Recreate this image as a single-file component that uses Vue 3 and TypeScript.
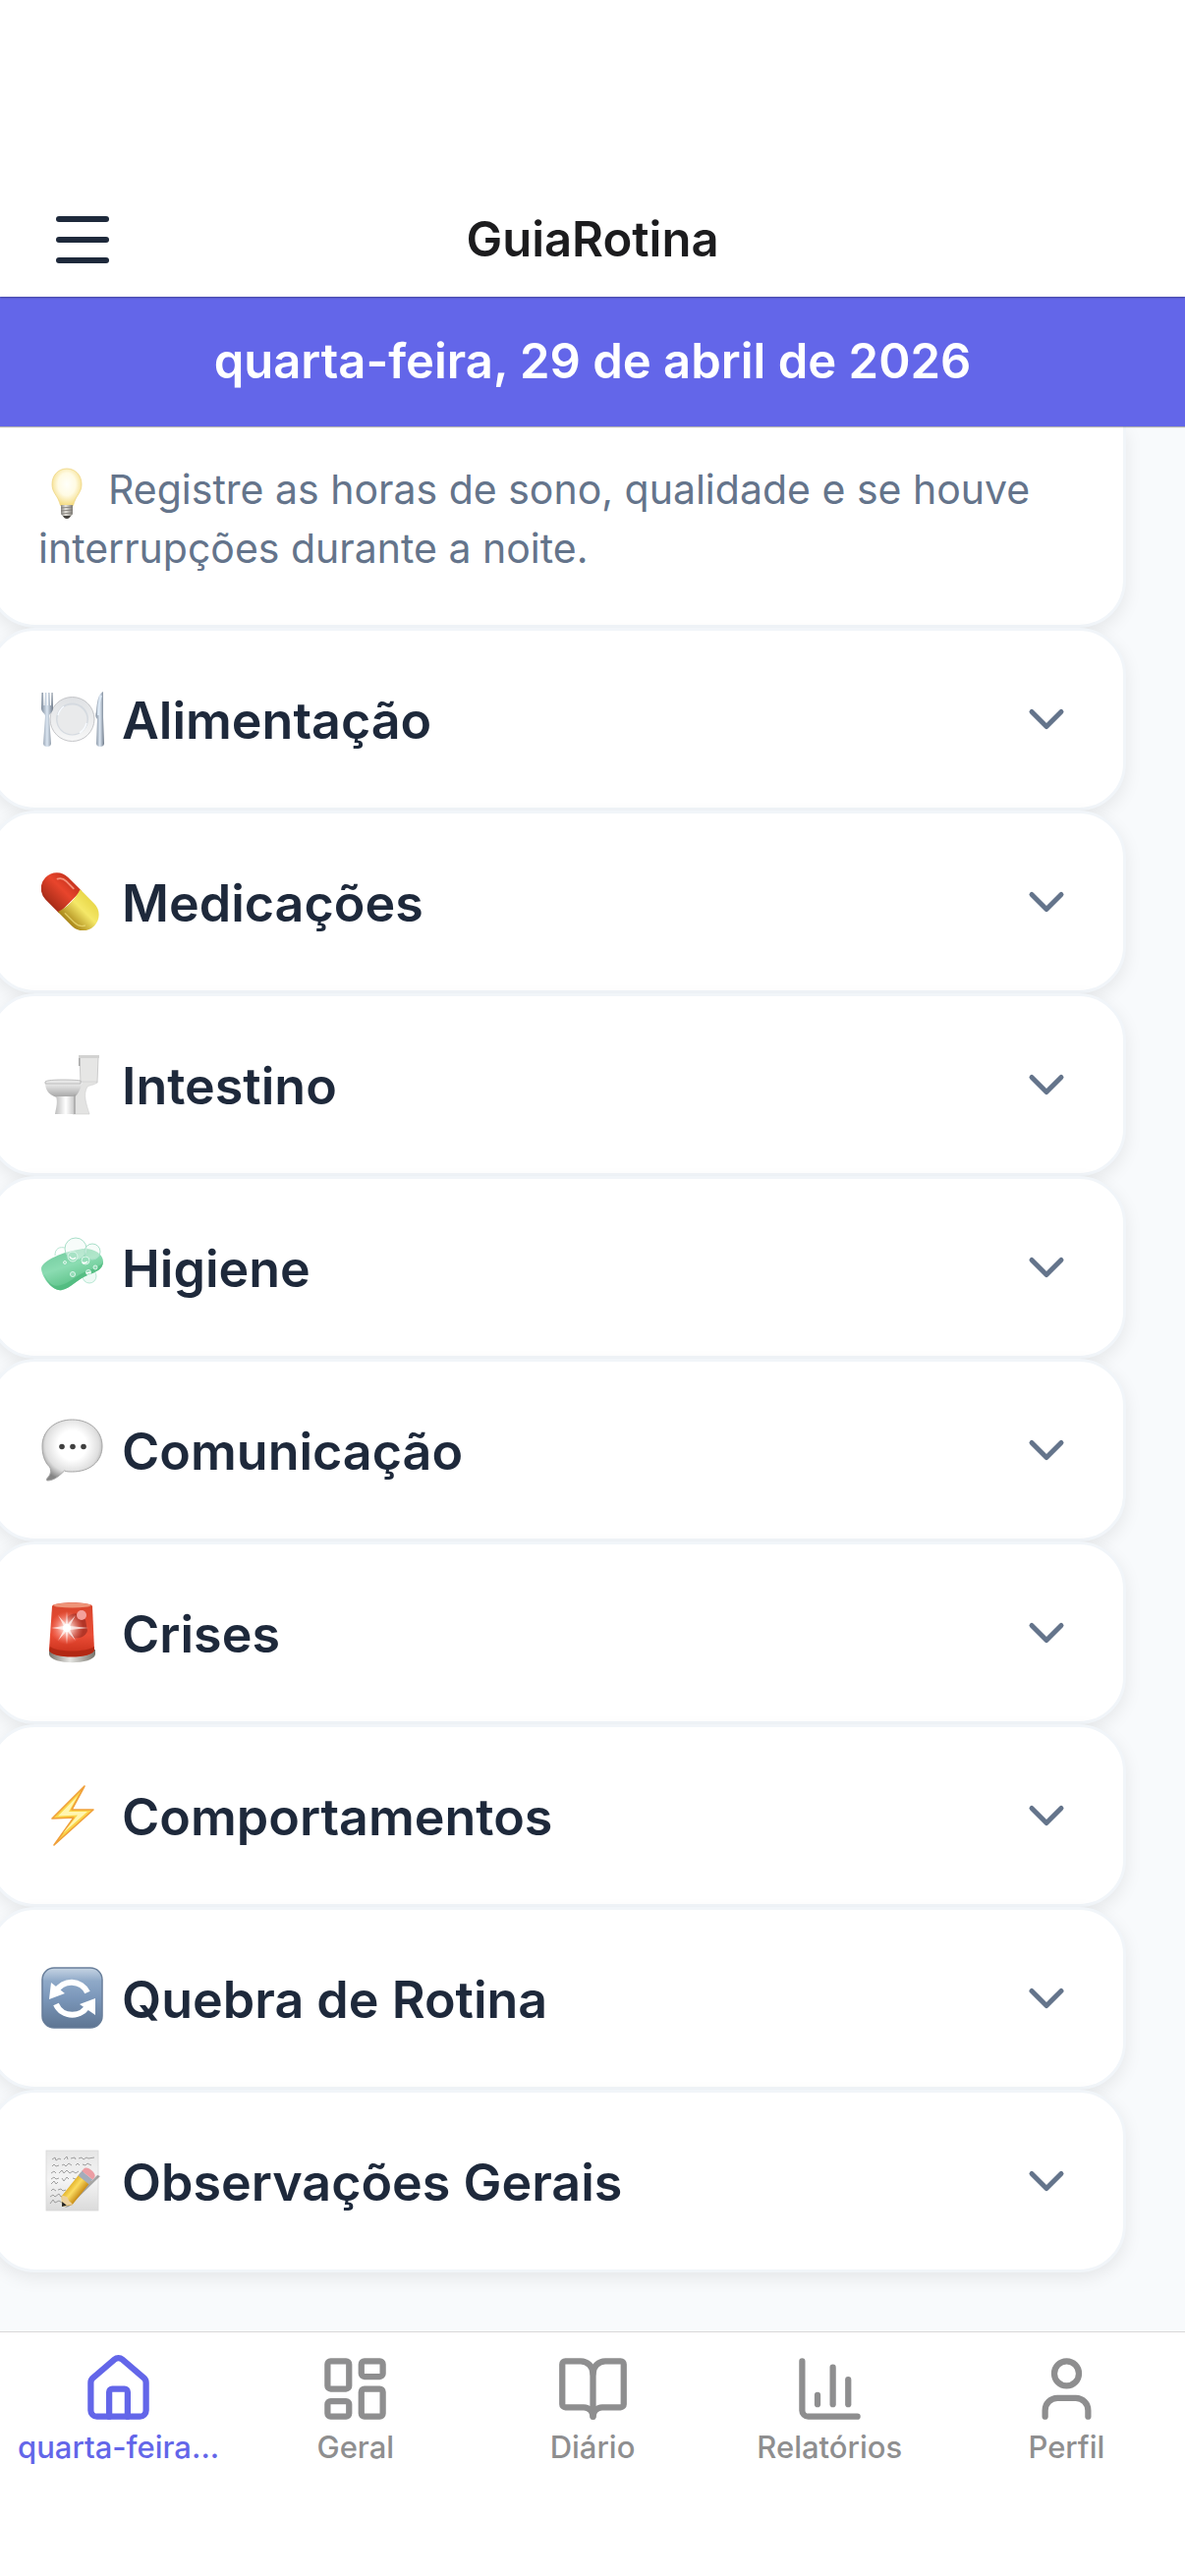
<script setup lang="ts">
import { ref } from 'vue'

interface Section {
  id: string
  title: string
}

interface Tab {
  id: string
  label: string
  paths: string[]
}

const today = 'quarta-feira, 29 de abril de 2026'

const sections: Section[] = [
  { id: 'food', title: 'Alimentação' },
  { id: 'pill', title: 'Medicações' },
  { id: 'toilet', title: 'Intestino' },
  { id: 'soap', title: 'Higiene' },
  { id: 'speech', title: 'Comunicação' },
  { id: 'siren', title: 'Crises' },
  { id: 'bolt', title: 'Comportamentos' },
  { id: 'refresh', title: 'Quebra de Rotina' },
  { id: 'memo', title: 'Observações Gerais' },
]

const tabs: Tab[] = [
  {
    id: 'today',
    label: 'quarta-feira...',
    paths: [
      'M15 21v-8a1 1 0 0 0-1-1h-4a1 1 0 0 0-1 1v8',
      'M3 10a2 2 0 0 1 .709-1.528l7-6a2 2 0 0 1 2.582 0l7 6A2 2 0 0 1 21 10v9a2 2 0 0 1-2 2H5a2 2 0 0 1-2-2z',
    ],
  },
  {
    id: 'general',
    label: 'Geral',
    paths: [
      'M4 3h5a1 1 0 0 1 1 1v7a1 1 0 0 1-1 1H4a1 1 0 0 1-1-1V4a1 1 0 0 1 1-1z',
      'M15 3h5a1 1 0 0 1 1 1v3a1 1 0 0 1-1 1h-5a1 1 0 0 1-1-1V4a1 1 0 0 1 1-1z',
      'M15 12h5a1 1 0 0 1 1 1v7a1 1 0 0 1-1 1h-5a1 1 0 0 1-1-1v-7a1 1 0 0 1 1-1z',
      'M4 16h5a1 1 0 0 1 1 1v3a1 1 0 0 1-1 1H4a1 1 0 0 1-1-1v-3a1 1 0 0 1 1-1z',
    ],
  },
  {
    id: 'diary',
    label: 'Diário',
    paths: [
      'M12 7v14',
      'M3 18a1 1 0 0 1-1-1V4a1 1 0 0 1 1-1h5a4 4 0 0 1 4 4 4 4 0 0 1 4-4h5a1 1 0 0 1 1 1v13a1 1 0 0 1-1 1h-6a3 3 0 0 0-3 3 3 3 0 0 0-3-3z',
    ],
  },
  {
    id: 'reports',
    label: 'Relatórios',
    paths: ['M3 3v16a2 2 0 0 0 2 2h16', 'M18 17V9', 'M13 17V5', 'M8 17v-3'],
  },
  {
    id: 'profile',
    label: 'Perfil',
    paths: ['M19 21v-2a4 4 0 0 0-4-4H9a4 4 0 0 0-4 4v2', 'M12 3a4 4 0 1 1 0 8 4 4 0 0 1 0-8z'],
  },
]

const activeTab = ref('today')
</script>

<template>
  <div class="page">
    <header class="header">
      <button class="menu" type="button" aria-label="Menu">
        <span class="menu-bar"></span>
        <span class="menu-bar"></span>
        <span class="menu-bar"></span>
      </button>
      <h1 class="brand">GuiaRotina</h1>
    </header>

    <div class="date-bar">{{ today }}</div>

    <main class="content">
      <section class="card hint">
        <p class="hint-text">
          <svg class="bulb" viewBox="0 0 32 52" aria-hidden="true">
            <defs>
              <radialGradient id="bulbGlass" cx=".5" cy=".42" r=".6">
                <stop offset="0" stop-color="#fffffa" />
                <stop offset=".5" stop-color="#fffbe4" />
                <stop offset="1" stop-color="#f3d876" />
              </radialGradient>
              <linearGradient id="bulbBase" x1="0" x2="1">
                <stop offset="0" stop-color="#8b8984" />
                <stop offset=".4" stop-color="#e8e6e0" />
                <stop offset="1" stop-color="#817e78" />
              </linearGradient>
            </defs>
            <path d="M16 1C7 1 1 8 1 17c0 8 5 11 7 17 1 2 1 4 2 5h12c1-1 1-3 2-5 2-6 7-9 7-17C31 8 25 1 16 1z" fill="url(#bulbGlass)" stroke="#efd684" stroke-width=".8" />
            <path d="M10 38h12v9c0 1-2 2-3 3h-6c-1-1-3-2-3-3z" fill="url(#bulbBase)" />
            <path d="M10 41l12-1M10 44l12-1M11 47l10-1" stroke="#77746f" stroke-width=".8" />
            <path d="M12 49h8c-1 2-2 3-4 3s-3-1-4-3z" fill="#45433f" />
          </svg>Registre as horas de sono, qualidade e se houve interrupções durante a noite.
        </p>
      </section>

      <button v-for="section in sections" :key="section.id" class="card row" type="button">
        <svg v-if="section.id === 'food'" class="emoji" viewBox="0 0 64 64" aria-hidden="true">
          <defs>
            <linearGradient id="plate" x1="0" y1="0" x2="0" y2="1">
              <stop offset="0" stop-color="#dfe1e4" />
              <stop offset="1" stop-color="#f7f7f7" />
            </linearGradient>
            <linearGradient id="steel" x1="0" x2="1">
              <stop offset="0" stop-color="#7f8c9c" />
              <stop offset=".5" stop-color="#dbe6f2" />
              <stop offset="1" stop-color="#6d7988" />
            </linearGradient>
          </defs>
          <circle cx="31.500" cy="32" r="22.500" fill="url(#plate)" stroke="#c5c6c9" stroke-width="1" />
          <circle cx="31.500" cy="32" r="16.500" fill="#d5dae0" />
          <circle cx="31.500" cy="32.500" r="15" fill="#e9eaeb" />
          <path d="M17 28a16 16 0 0 1 6-9M46 36a16 16 0 0 1-7 10" fill="none" stroke="#f8fbff" stroke-width="1.500" />
          <path d="M.500 5h1.500l.5 13h1L4 5h1.500l.3 13h1L7 5h1.500l.5 13h1L10.500 5H11.500L12 21c0 4-4 5-4 8L10 57c0 4-8 4-8 0L4 29c0-3-4-4-4-8z" fill="url(#steel)" />
          <path d="M63 4v26l1 27c0 4-8 4-8 0l1-25c-2-2-2-4-1-8 1-11 2-18 7-20z" fill="url(#steel)" />
          <path d="M61 8c-2 5-3 12-3 20" fill="none" stroke="#dde9f5" stroke-width="2" />
        </svg>

        <svg v-else-if="section.id === 'pill'" class="emoji" viewBox="0 0 64 64" aria-hidden="true">
          <defs>
            <linearGradient id="pillRed" x1="0" y1="0" x2="0" y2="1">
              <stop offset="0" stop-color="#c9341f" />
              <stop offset=".4" stop-color="#e8452c" />
              <stop offset="1" stop-color="#a82c18" />
            </linearGradient>
            <linearGradient id="pillYellow" x1="0" y1="0" x2="0" y2="1">
              <stop offset="0" stop-color="#e9d84a" />
              <stop offset=".4" stop-color="#f5e868" />
              <stop offset="1" stop-color="#a98517" />
            </linearGradient>
          </defs>
          <g transform="translate(29.500 32) rotate(45) scale(.92) translate(-31 -32)">
            <path d="M31 14.500H10a17.500 17.500 0 0 0 0 35h21z" fill="url(#pillRed)" />
            <path d="M29 14.500h22a17.500 17.500 0 0 1 0 35H29c4-11 4-24 0-35z" fill="url(#pillYellow)" />
            <path d="M3 24c2-4 5-5 9-5h11" fill="none" stroke="#f6907a" stroke-width="2" stroke-linecap="round" />
            <path d="M36 45h14c5 0 9-2 11-6" fill="none" stroke="#efe07a" stroke-width="1.500" stroke-linecap="round" opacity=".7" />
          </g>
        </svg>

        <svg v-else-if="section.id === 'toilet'" class="emoji" viewBox="0 0 64 64" aria-hidden="true">
          <defs>
            <linearGradient id="bowl" x1="0" y1="0" x2="0" y2="1">
              <stop offset="0" stop-color="#f0f0f0" />
              <stop offset="1" stop-color="#a4a4a4" />
            </linearGradient>
            <linearGradient id="foot" x1="0" x2="1">
              <stop offset="0" stop-color="#bdbdbd" />
              <stop offset=".55" stop-color="#fff" />
              <stop offset="1" stop-color="#c4c4c4" />
            </linearGradient>
          </defs>
          <path d="M39 4h19l-1 26H40z" fill="#e6e6e5" stroke="#c2c2c2" stroke-width=".8" />
          <path d="M38 2h21v3H38z" fill="#d2d2d1" />
          <path d="M38 5h1.500v8H38z" fill="#aaa" />
          <path d="M40 29h17c-1 3-6 3-10 5-5 8-1 18 2 28H32V40z" fill="#e3e3e2" stroke="#cdcdcd" stroke-width=".6" />
          <path d="M4 30c0 10 6 13 12 15h17c4-2 7-9 9-15z" fill="url(#bowl)" />
          <path d="M15 44h19v18H14c1-6 3-12 1-18z" fill="url(#foot)" />
          <path d="M34 42v20" stroke="#a6a6a6" stroke-width="1.500" />
          <path d="M4 29c3-3 33-2 36-1v3H4z" fill="#e6e6e6" stroke="#a9a9a9" stroke-width=".7" />
        </svg>

        <svg v-else-if="section.id === 'soap'" class="emoji" viewBox="0 0 64 64" aria-hidden="true">
          <defs>
            <linearGradient id="soap" x1="0" y1="0" x2=".5" y2="1">
              <stop offset="0" stop-color="#6dc79a" />
              <stop offset=".5" stop-color="#8bdcb2" />
              <stop offset="1" stop-color="#53bd80" />
            </linearGradient>
          </defs>
          <circle cx="49" cy="41" r="7" fill="#edf9f4" stroke="#b7e8d3" />
          <path d="M0 33C1 25 22 16 42 13c11-1 21 5 21 13 0 8-8 11-16 14-10 4-17 13-26 15C11 57 0 41 0 33z" fill="url(#soap)" />
          <path d="M3 39c5 12 12 13 17 11 9-2 17-11 26-14 8-3 15-5 17-10 0 8-8 11-16 14-10 4-17 13-26 15C13 57 5 46 3 39z" fill="#4fba7d" opacity=".75" />
          <circle cx="35" cy="13" r="11" fill="#f0faf6" fill-opacity=".5" stroke="#a9dfc9" />
          <circle cx="52" cy="16" r="8" fill="#e8f8f1" fill-opacity=".4" stroke="#a9dfc9" />
          <path d="M14 20c0-8 5-9 10-8" fill="none" stroke="#b7e5d2" />
          <g fill="#9fe0c1" fill-opacity=".7" stroke="#dcf6ea">
            <circle cx="32" cy="21" r="5" />
            <circle cx="45" cy="25" r="4" />
            <circle cx="48" cy="37" r="2.500" />
            <circle cx="55" cy="32" r="2" />
            <circle cx="32" cy="39" r="2.500" />
            <circle cx="24" cy="27" r="1.500" />
          </g>
          <path d="M29 21c1 3 4 3 6 1M42 27c2 1 4 0 5-1M46 38l4-1" fill="none" stroke="#fff" stroke-width="1.500" />
        </svg>

        <svg v-else-if="section.id === 'speech'" class="emoji" viewBox="0 0 64 64" aria-hidden="true">
          <defs>
            <radialGradient id="speech" cx=".5" cy=".42" r=".6">
              <stop offset=".4" stop-color="#fff" />
              <stop offset=".75" stop-color="#dedede" />
              <stop offset="1" stop-color="#858585" />
            </radialGradient>
          </defs>
          <path d="M31.500 1C49 1 62 12 62 28S49 54 31.500 54c-3 0-6 0-8-1-4 4-10 10-17 10-2 0-1-2 0-3 3-3 4-7 2-11C3 44 1 36 1 28 1 12 14 1 31.500 1z" fill="url(#speech)" stroke="#a6a6a6" stroke-width="1" />
          <g fill="#3f3f3f">
            <circle cx="21" cy="28.500" r="2.800" />
            <circle cx="32" cy="28.500" r="2.800" />
            <circle cx="43" cy="28.500" r="2.800" />
          </g>
        </svg>

        <svg v-else-if="section.id === 'siren'" class="emoji" viewBox="0 0 64 64" aria-hidden="true">
          <defs>
            <linearGradient id="siren" x1="0" y1="0" x2="0" y2="1">
              <stop offset="0" stop-color="#d8452c" />
              <stop offset=".6" stop-color="#ea4d36" />
              <stop offset="1" stop-color="#c42c17" />
            </linearGradient>
            <linearGradient id="sirenBase" x1="0" x2="1">
              <stop offset="0" stop-color="#77736b" />
              <stop offset=".45" stop-color="#e5e5e2" />
              <stop offset="1" stop-color="#77736b" />
            </linearGradient>
            <radialGradient id="flare">
              <stop offset="0" stop-color="#fff" />
              <stop offset=".35" stop-color="#ffd0c8" stop-opacity=".8" />
              <stop offset="1" stop-color="#ff8070" stop-opacity="0" />
            </radialGradient>
          </defs>
          <path d="M8 49v5c2 11 45 11 47 0v-5z" fill="url(#sirenBase)" />
          <path d="M11 5c1-5 40-5 41 0l2 44c0 10-46 10-46 0z" fill="url(#siren)" />
          <path d="M9 46c8 6 36 6 45 0v4c-3 8-43 8-46 0z" fill="#a92511" opacity=".75" />
          <ellipse cx="31.500" cy="4" rx="19" ry="2.500" fill="#ee9478" />
          <path d="M25 18c5-8 16-7 20 1l2 11c-3 8-12 9-19 5z" fill="#9d2c22" opacity=".7" />
          <circle cx="41" cy="14" r="5" fill="#f3a19b" />
          <circle cx="26" cy="27" r="17" fill="url(#flare)" />
          <path d="M26 10l1 13 8-9-6 11 19 2-19 2 6 11-8-9-1 13-1-13-8 9 6-11-13-2 13-2-6-11 8 9z" fill="#fff" opacity=".7" />
          <circle cx="26" cy="27" r="4" fill="#fff" />
        </svg>

        <svg v-else-if="section.id === 'bolt'" class="emoji" viewBox="0 0 64 64" aria-hidden="true">
          <path d="M44 2L11 35l22-1L13 62 53 26H31z" fill="#fbd648" stroke="#f0a03a" stroke-width="1.600" stroke-linejoin="round" />
          <path d="M37 12L17 32.500l20-1L22 50 47 28H28z" fill="#fff6b0" />
        </svg>

        <svg v-else-if="section.id === 'refresh'" class="emoji" viewBox="0 0 64 64" aria-hidden="true">
          <defs>
            <linearGradient id="tile" x1="0" y1="0" x2="0" y2="1">
              <stop offset="0" stop-color="#c7d5e4" />
              <stop offset=".22" stop-color="#8fa9c8" />
              <stop offset=".5" stop-color="#7b97ba" />
              <stop offset="1" stop-color="#5e7592" />
            </linearGradient>
          </defs>
          <rect x="1" y="1" width="61" height="61" rx="12" fill="url(#tile)" stroke="#687e9a" stroke-width="1.500" />
          <g fill="none" stroke="#fff" stroke-width="6">
            <path d="M15 25a18 18 0 0 1 32 1" />
            <path d="M48 38a18 18 0 0 1-33 0" />
          </g>
          <path d="M10 16L8 33l16-6zM55 49V32l-16 6z" fill="#fff" />
        </svg>

        <svg v-else class="emoji" viewBox="0 0 64 64" aria-hidden="true">
          <defs>
            <linearGradient id="sheet" x1="0" y1="0" x2="0" y2="1">
              <stop offset="0" stop-color="#e6e6e6" />
              <stop offset=".5" stop-color="#f4f4f4" />
              <stop offset="1" stop-color="#dadada" />
            </linearGradient>
            <linearGradient id="pencil" x1="0" y1="0" x2="0" y2="1">
              <stop offset="0" stop-color="#e5b52d" />
              <stop offset=".4" stop-color="#fbdc62" />
              <stop offset="1" stop-color="#c98d17" />
            </linearGradient>
          </defs>
          <rect x="5" y="1" width="53" height="61" fill="url(#sheet)" stroke="#d8d8d8" stroke-width=".8" />
          <g fill="none" stroke="#8c8c8c" stroke-width=".8">
            <path d="M11 10l3-2 1 3 3-2 2 1m3 0l3-3 1 3m3-1l4-1 1 2m3-1l3-1 2 2 3-2 2 1 6-1" />
            <path d="M11 17l2-2 2 2 3-1m3 0l2-1 2 2 3-3 3 2m4 0l2-2 2 2m3-1l3 1 2-2 4 2" />
            <path d="M10 24l3-2 2 2m3 0l3-3 2 3 3-3 3 3 3-2 3 2 3-2m3 0l3 1" />
            <path d="M10 30l3-2 2 2 3-1m3 0l2 3 3-4 2 2m4-1l3 1" />
            <path d="M10 35l3-3 2 3 2-2M10 42l2-2 3 2m2-1l3-1 2 2 3-1M9 48l3-2 2 2 4-3 2 3 4-2M9 55l3-4 2 3 4-2 3 2" />
          </g>
          <path d="M24 59l33-33 3 1-32 31z" fill="#333" opacity=".4" />
          <g transform="translate(21 58) rotate(-51)">
            <path d="M0 0L8-7h31V7H8z" fill="url(#pencil)" />
            <path d="M0 0L9-7 11-2 9 2 9 7z" fill="#ecd19e" />
            <path d="M0 0l4-3v6z" fill="#222" />
            <path d="M35-7h6V7h-6z" fill="#a4acbb" />
            <path d="M41-7h3c5 0 5 14 0 14h-3z" fill="#ec9da3" />
          </g>
        </svg>

        <span class="row-title">{{ section.title }}</span>
        <svg class="chevron" viewBox="0 0 24 24" aria-hidden="true"><path d="m6 9 6 6 6-6" /></svg>
      </button>
    </main>

    <nav class="tabs">
      <a
        v-for="tab in tabs"
        :key="tab.id"
        class="tab"
        :class="{ active: tab.id === activeTab }"
        :href="'#' + tab.id"
        @click.prevent="activeTab = tab.id"
      >
        <svg class="tab-icon" viewBox="0 0 24 24" aria-hidden="true">
          <path v-for="d in tab.paths" :key="d" :d="d" />
        </svg>
        <span>{{ tab.label }}</span>
      </a>
    </nav>
  </div>
</template>

<style>
body {
  margin: 0;
  background: #fff;
}
</style>

<style scoped>
.page {
  box-sizing: border-box;
  display: flex;
  flex-direction: column;
  min-height: 100vh;
  overflow-x: clip;
  background: #fff;
  font-family: Inter, 'Liberation Sans', sans-serif;
}

.header {
  position: relative;
  z-index: 2;
  display: grid;
  grid-template-columns: 1fr auto 1fr;
  align-items: center;
  height: 116px;
  padding: 186px 57px 0;
  background: #fff;
  box-shadow: 0 1px 2px rgba(0, 0, 0, 0.35);
}

.menu {
  display: flex;
  flex-direction: column;
  gap: 15px;
  width: 54px;
  padding: 0;
  border: 0;
  background: none;
}

.menu-bar {
  height: 6px;
  border-radius: 3px;
  background: #1e293b;
}

.brand {
  margin: 0;
  color: #1c1c1e;
  font-size: 49px;
  font-weight: 600;
  line-height: 60px;
}

.date-bar {
  position: relative;
  z-index: 1;
  padding: 36px 48px;
  background: #6366e9;
  box-shadow: 0 1px 1px rgba(0, 0, 0, 0.3);
  color: #fff;
  font-size: 49px;
  font-weight: 600;
  line-height: 60px;
  text-align: center;
}

.content {
  display: flex;
  flex: 1;
  flex-direction: column;
  padding: 0 60px 60px 0;
  background: #f8fafc;
}

.card {
  box-sizing: border-box;
  margin-left: -12px;
  border: 3px solid #f1f5f9;
  border-radius: 48px;
  background: #fff;
  box-shadow: 0 6px 18px rgba(0, 0, 0, 0.08);
}

.hint {
  padding: 34px 48px 48px;
  border-top: 0;
  border-radius: 0 0 48px 48px;
}

.hint-text {
  margin: 0;
  color: #64748b;
  font-size: 41px;
  line-height: 60px;
}

.bulb {
  width: 32px;
  height: 52px;
  margin: -4px 26px -4px 13px;
  vertical-align: -11px;
}

.row {
  display: flex;
  align-items: center;
  gap: 18px;
  height: 186px;
  padding: 0 48px 0 51px;
  color: #1e293b;
  font: inherit;
  text-align: left;
}

.emoji {
  flex: none;
  width: 64px;
  height: 64px;
}

.row-title {
  flex: 1;
  padding-top: 3px;
  font-size: 52px;
  font-weight: 600;
  line-height: 66px;
}

.chevron {
  flex: none;
  width: 60px;
  height: 60px;
  fill: none;
  stroke: #64748b;
  stroke-width: 2;
  stroke-linecap: round;
  stroke-linejoin: round;
}

.tabs {
  box-sizing: border-box;
  display: flex;
  height: 249px;
  padding-top: 20px;
  border-top: 1px solid #d8d8d8;
  background: #fff;
}

.tab {
  display: flex;
  flex: 1 1 0;
  flex-direction: column;
  align-items: center;
  gap: 4px;
  min-width: 0;
  color: #8e8e8f;
  font-size: 31px;
  font-weight: 500;
  line-height: 36px;
  text-decoration: none;
  white-space: nowrap;
}

.tab.active {
  color: #6366e9;
}

.tab-icon {
  width: 75px;
  height: 75px;
  fill: none;
  stroke: currentColor;
  stroke-width: 2;
  stroke-linecap: round;
  stroke-linejoin: round;
}
</style>
